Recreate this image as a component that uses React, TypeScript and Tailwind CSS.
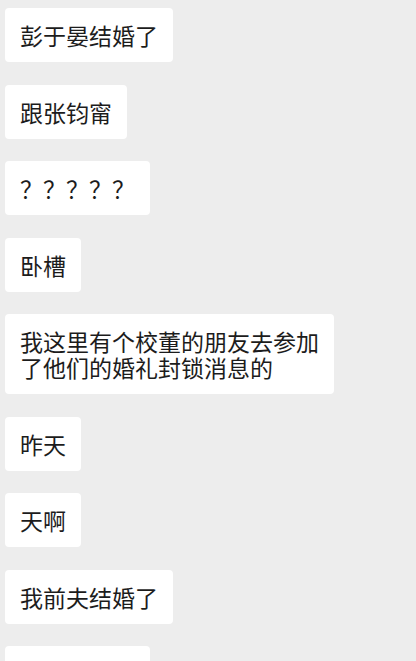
const messages: string[][] = [
  ['彭于晏结婚了'],
  ['跟张钧甯'],
  ['？？？？？'],
  ['卧槽'],
  ['我这里有个校董的朋友去参加', '了他们的婚礼封锁消息的'],
  ['昨天'],
  ['天啊'],
  ['我前夫结婚了'],
  ['那也挺好的'],
];

export default function App() {
  return (
    <div
      className="h-[661px] w-[416px] overflow-hidden bg-[#ededed] px-[5px] pt-[8px]"
      style={{ fontFamily: '"Noto Sans CJK SC", "Noto Sans", sans-serif' }}
    >
      <div className="flex flex-col items-start gap-[22.5px]">
        {messages.map((lines, i) => (
          <div
            key={i}
            className="rounded-[4px] bg-white px-[15px] py-[14px] text-[23px] leading-[26px] text-[#1c1c1c] whitespace-nowrap"
          >
            {lines.map((line, j) => (
              <div key={j}>{line}</div>
            ))}
          </div>
        ))}
      </div>
    </div>
  );
}
